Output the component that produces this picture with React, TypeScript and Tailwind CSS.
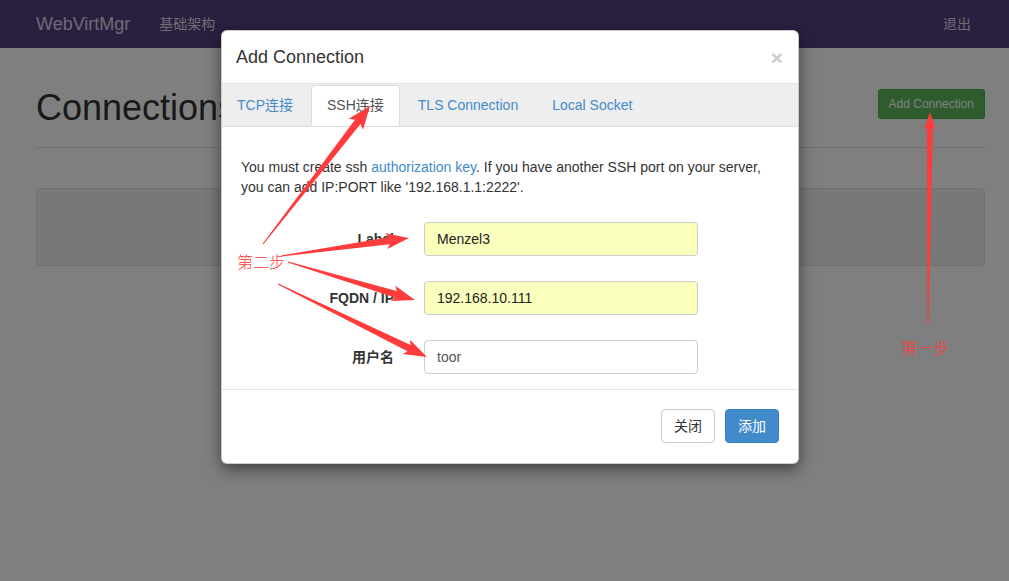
import type { ReactNode } from 'react';

const FONT = "font-['Liberation_Sans','Noto_Sans_CJK_SC',sans-serif]";

// tapered annotation arrow, thin at tail, thick at head
function arrowPoints(x1: number, y1: number, x2: number, y2: number, w0 = 1, w1 = 6, hl = 18, hw = 8) {
  const dx = x2 - x1;
  const dy = y2 - y1;
  const len = Math.hypot(dx, dy);
  const ux = dx / len;
  const uy = dy / len;
  const nx = -uy;
  const ny = ux;
  const bx = x2 - ux * hl;
  const by = y2 - uy * hl;
  const p = (x: number, y: number) => `${x.toFixed(1)},${y.toFixed(1)}`;
  return [
    p(x1 + (nx * w0) / 2, y1 + (ny * w0) / 2),
    p(bx + (nx * w1) / 2, by + (ny * w1) / 2),
    p(bx - ux * 3 + nx * hw, by - uy * 3 + ny * hw),
    p(x2, y2),
    p(bx - ux * 3 - nx * hw, by - uy * 3 - ny * hw),
    p(bx - (nx * w1) / 2, by - (ny * w1) / 2),
    p(x1 - (nx * w0) / 2, y1 - (ny * w0) / 2),
  ].join(' ');
}

const arrows = [
  { a: [263, 244, 370, 106], w1: 7, hl: 20, hw: 9 },
  { a: [281, 256, 409, 238], w1: 7, hl: 20, hw: 8 },
  { a: [288, 262, 415, 300], w1: 7, hl: 20, hw: 8 },
  { a: [278, 284, 427, 357], w1: 7, hl: 20, hw: 8 },
  { a: [928, 325, 930, 112], w1: 6, hl: 15, hw: 6 },
];

function Field({ label, value, filled, muted }: { label: string; value: string; filled?: boolean; muted?: boolean }) {
  return (
    <div className="flex items-center">
      <label className="w-[153px] text-right text-[14px] font-bold text-[#333]">{label}</label>
      <div
        className={`ml-[30px] w-[274px] h-[34px] flex items-center px-[12px] border border-[#ccc] rounded-[4px] text-[14px] ${
          filled ? 'bg-[#faffbd]' : 'bg-white'
        } ${muted ? 'text-[#555]' : 'text-[#222]'}`}
      >
        {value}
      </div>
    </div>
  );
}

function Tab({ children, active }: { children: ReactNode; active?: boolean }) {
  return (
    <div
      className={`mr-[2px] h-[41px] px-[15px] flex items-center text-[14px] rounded-t-[4px] border ${
        active ? 'bg-white border-[#ddd] border-b-white text-[#555] -mb-px' : 'border-transparent text-[#428bca]'
      }`}
    >
      {children}
    </div>
  );
}

export default function App() {
  return (
    <div className={`relative w-[1009px] h-[581px] overflow-hidden bg-white ${FONT}`}>
      <nav className="h-[48px] bg-[#573e7f] flex items-center pl-[36px] pr-[38px]">
        <span className="text-[18px] text-[#dcd6e6]">WebVirtMgr</span>
        <span className="ml-[29px] text-[14px] text-[#dcd6e6]">基础架构</span>
        <span className="ml-auto text-[14px] text-[#dcd6e6]">退出</span>
      </nav>

      <main className="px-[36px] pr-[24px]">
        <div className="mt-[40px] flex justify-between items-start border-b border-[#e5e5e5] pb-[19px]">
          <h1 className="text-[36px] leading-[40px] text-[#333]">Connections</h1>
          <button className="mt-[1px] h-[30px] px-[10px] bg-[#5cb85c] border border-[#4cae4c] rounded-[3px] text-[12px] text-white">
            Add Connection
          </button>
        </div>
        <div className="mt-[40px] h-[78px] bg-[#f1f1f1] border border-[#e1e1e1] rounded-[4px]" />
      </main>

      <div className="absolute inset-0 bg-black/50" />

      <div className="absolute left-[221px] top-[30px] w-[578px] bg-white rounded-[6px] border border-black/20 shadow-[0_5px_15px_rgba(0,0,0,0.5)]">
        <div className="h-[53px] px-[14px] flex items-center justify-between border-b border-[#e5e5e5]">
          <h4 className="text-[18px] text-[#333]">Add Connection</h4>
          <span className="text-[21px] font-bold leading-none text-[#ccc] mr-[1px]">×</span>
        </div>
        <div className="flex bg-[#eee] pt-[1px] pl-0 border-b border-[#ddd]">
          <div className="flex -ml-px">
            <Tab>TCP连接</Tab>
            <Tab active>SSH连接</Tab>
            <Tab>TLS Connection</Tab>
            <Tab>Local Socket</Tab>
          </div>
        </div>
        <div className="px-[19px] pt-[30px] pb-[15px]">
          <p className="text-[14px] leading-[20px] text-[#333]">
            You must create ssh <span className="text-[#428bca]">authorization key</span>. If you have another SSH port on your server,
            you can add IP:PORT like '192.168.1.1:2222'.
          </p>
          <div className="mt-[25px] flex flex-col gap-[25px]">
            <Field label="Label" value="Menzel3" filled />
            <Field label="FQDN / IP" value="192.168.10.111" filled />
            <Field label="用户名" value="toor" muted />
          </div>
        </div>
        <div className="border-t border-[#e5e5e5] px-[19px] pt-[19px] pb-[20px] flex justify-end gap-[10px]">
          <button className="h-[34px] px-[12px] bg-white border border-[#ccc] rounded-[4px] text-[14px] text-[#333]">关闭</button>
          <button className="h-[34px] px-[12px] bg-[#428bca] border border-[#357ebd] rounded-[4px] text-[14px] text-white">添加</button>
        </div>
      </div>

      <svg className="absolute inset-0 pointer-events-none" width="1009" height="581" viewBox="0 0 1009 581">
        {arrows.map(({ a, w1, hl, hw }, i) => (
          <polygon key={i} points={arrowPoints(a[0], a[1], a[2], a[3], 1, w1, hl, hw)} fill="#ff3b3b" />
        ))}
      </svg>
      <span className="absolute left-[237px] top-[251px] text-[16px] leading-[20px] text-[#ff3b3b] font-['Noto_Sans_CJK_SC',sans-serif] font-light">
        第二步
      </span>
      <span className="absolute left-[901px] top-[337px] text-[16px] leading-[20px] text-[#ff3b3b] font-['Noto_Sans_CJK_SC',sans-serif] font-light">
        第一步
      </span>
    </div>
  );
}
